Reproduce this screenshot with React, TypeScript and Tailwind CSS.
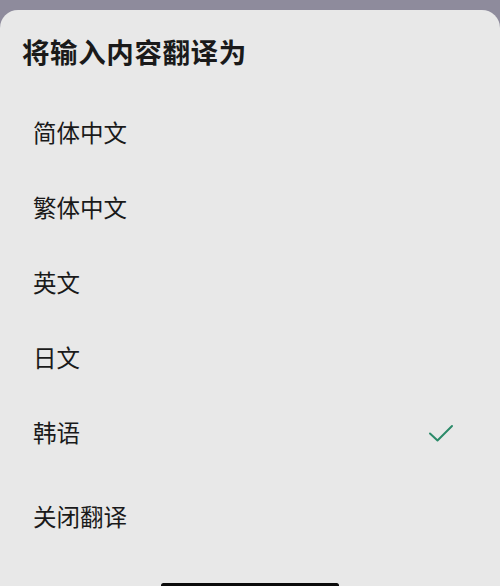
import React from "react";

const languages = ["简体中文", "繁体中文", "英文", "日文", "韩语"];
const selected = "韩语";

const Check = () => (
  <svg width="28" height="22" viewBox="0 0 28 22" fill="none">
    <path
      d="M3 11.5 L10.5 18.5 L25 4"
      stroke="#2b8a69"
      strokeWidth="2"
      strokeLinecap="round"
      strokeLinejoin="round"
    />
  </svg>
);

export default function App() {
  return (
    <div
      className="w-[500px] h-[586px] overflow-hidden bg-[#8e8b9c] flex flex-col"
      style={{ fontFamily: '"Noto Sans CJK SC", "Noto Sans", sans-serif' }}
    >
      <div className="h-[10px] shrink-0" />
      <div className="flex-1 bg-[#e8e8e8] rounded-t-[18px] flex flex-col text-[#1a1a1a]">
        <div className="h-[85px] shrink-0 flex items-center pl-[22px] pb-[1px]">
          <h1 className="text-[27.5px] font-bold tracking-[0.6px] leading-none">将输入内容翻译为</h1>
        </div>
        {languages.map((lang) => (
          <div
            key={lang}
            className="h-[75px] shrink-0 flex items-center justify-between pl-[33px] pr-[45px]"
          >
            <span className="text-[23.5px] leading-none">{lang}</span>
            {lang === selected && <Check />}
          </div>
        ))}
        <div className="h-[75px] shrink-0 mt-[9px] flex items-center pl-[33px]">
          <span className="text-[23.5px] leading-none">关闭翻译</span>
        </div>
        <div className="flex justify-center shrink-0 mt-[29px]">
          <div className="w-[178px] h-[5px] rounded-full bg-[#0b0b0b]" />
        </div>
      </div>
    </div>
  );
}
